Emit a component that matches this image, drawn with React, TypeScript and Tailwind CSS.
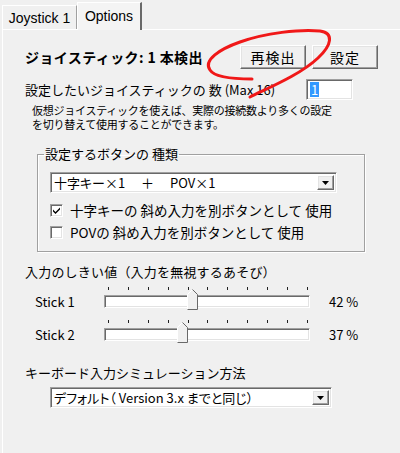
import React from 'react'

const raised =
  'border border-t-white border-l-white border-r-[#696969] border-b-[#696969] shadow-[inset_-1px_-1px_0_#a0a0a0,inset_1px_1px_0_#e3e3e3]'
const sunken =
  'border border-t-[#a0a0a0] border-l-[#a0a0a0] border-r-white border-b-white shadow-[inset_1px_1px_0_#696969,inset_-1px_-1px_0_#e3e3e3]'

function Combo({ text, width, textClass }: { text: string; width: string; textClass?: string }) {
  return (
    <div className={`${width} h-[21px] bg-white flex items-center p-[2px] ${sunken}`}>
      <span className={`flex-1 pl-[1px] text-[13px] leading-[16px] whitespace-nowrap ${textClass ?? ''}`}>{text}</span>
      <div className={`w-[17px] h-full flex items-center justify-center bg-[#f0f0f0] ${raised}`}>
        <svg width="7" height="4" viewBox="0 0 7 4">
          <path d="M0 0h7L3.5 4z" fill="#000" />
        </svg>
      </div>
    </div>
  )
}

function Check({ checked, label }: { checked?: boolean; label: string }) {
  return (
    <div className="flex items-center h-[16px]">
      <span className={`w-[13px] h-[13px] bg-white flex items-center justify-center ${sunken}`}>
        {checked && (
          <svg width="7" height="7" viewBox="0 0 7 7">
            <path d="M0 2.5L2.5 5L7 0.5V2.5L2.5 7L0 4.5Z" fill="#000" />
          </svg>
        )}
      </span>
      <span className="ml-[7px] text-[13.5px] leading-[16px] whitespace-nowrap">{label}</span>
    </div>
  )
}

function Slider({ value }: { value: number }) {
  return (
    <div className="relative w-[206px]">
      <div className="flex justify-between pl-[4px] pr-[2px] h-[3px]">
        {Array.from({ length: 11 }).map((_, i) => (
          <span key={i} className="w-px h-full bg-[#222]" />
        ))}
      </div>
      <div className={`mt-[5px] h-[13px] bg-white ${sunken}`} />
      {/* thumb */}
      <svg className="absolute top-[2px]" style={{ left: value * 2 - 1 }} width="11" height="21" viewBox="0 0 11 21">
        <path d="M0.5 20.5V5.5L5.5 0.5L10.5 5.5V20.5Z" fill="#f0f0f0" />
        <path d="M0.5 20.5V5.5L5.5 0.5" stroke="#fff" fill="none" />
        <path d="M5.5 0.5L10.5 5.5V20.5H0.5" stroke="#696969" fill="none" />
      </svg>
    </div>
  )
}

function StickRow({ name, value }: { name: string; value: number }) {
  return (
    <div className="flex items-end ml-[10px]">
      <span className="w-[69px] text-[13px] leading-[13px]">{name}</span>
      <Slider value={value} />
      <span className="ml-[19px] text-[13px] leading-[13px]">{value} %</span>
    </div>
  )
}

export default function App() {
  return (
    <div className="relative w-[400px] h-[453px] overflow-hidden bg-[#f0f0f0] text-black font-['Noto_Sans_CJK_JP',sans-serif] flex flex-col">
      {/* Tabs */}
      <div className="flex items-end h-[29px] pl-[2px] font-['Liberation_Sans',sans-serif] text-[14px]">
        <div className="h-[24px] w-[75px] flex items-center justify-center pt-px border-t border-l border-white border-r border-r-[#a0a0a0] bg-[#f0f0f0]">
          Joystick 1
        </div>
        <div className="relative z-10 -mb-px h-[28px] w-[65px] flex items-start justify-center pt-[3px] border-t border-l border-white border-r-2 border-r-[#696969] bg-[#f4f4f4]">
          Options
        </div>
      </div>

      {/* Page */}
      <div className="flex-1 ml-[2px] border-t border-l border-white pl-[22px] pt-[15px] flex flex-col">
        <div className="flex items-center h-[24px]">
          <span className="w-[215px] text-[14px] font-bold tracking-[0.4px] whitespace-nowrap">ジョイスティック: 1 本検出</span>
          <button className={`w-[66px] h-[24px] text-[14px] tracking-[1px] bg-[#f0f0f0] ${raised}`}>再検出</button>
          <button className={`ml-[6px] w-[66px] h-[24px] text-[14px] tracking-[1px] bg-[#f0f0f0] ${raised}`}>設定</button>
        </div>

        <div className="mt-[10px] flex items-center h-[21px]">
          <span className="w-[281px] text-[13px] whitespace-nowrap">設定したいジョイスティックの 数 (Max 16)</span>
          <div className={`w-[47px] h-[21px] bg-white flex items-center pl-[3px] ${sunken}`}>
            <span className="bg-[#3399ff] text-white text-[13px] leading-[15px] px-px">1</span>
          </div>
        </div>

        <p className="mt-[3px] ml-[7px] text-[11px] leading-[14px] tracking-[-0.25px]">
          仮想ジョイスティックを使えば、実際の接続数より多くの設定
          <br />
          を切り替えて使用することができます。
        </p>

        <fieldset className="mt-[15px] ml-[12px] w-[328px] border border-[#a0a0a0] shadow-[1px_1px_0_#fff,inset_1px_1px_0_#fff] px-[6px] pb-[11px]">
          <legend className="px-px text-[13px] leading-[16px]">設定するボタンの 種類</legend>
          <div className="pl-[6px] flex flex-col">
            <div className="mt-[10px]">
              <Combo width="w-[287px]" text="十字キー×1 　＋ 　POV×1" textClass="[font-feature-settings:'palt']" />
            </div>
            <div className="mt-[9px]">
              <Check checked label="十字キーの 斜め入力を別ボタンとして 使用" />
            </div>
            <div className="mt-[6px]">
              <Check label="POVの 斜め入力を別ボタンとして 使用" />
            </div>
          </div>
        </fieldset>

        <div className="mt-[12px] text-[13px] leading-[16px] tracking-[0.2px]">入力のしきい値（入力を無視するあそび）</div>

        <div className="mt-[7px]">
          <StickRow name="Stick 1" value={42} />
        </div>
        <div className="mt-[12px]">
          <StickRow name="Stick 2" value={37} />
        </div>

        <div className="mt-[24px] text-[13px] leading-[16px]">キーボード入力シミュレーション方法</div>
        <div className="mt-[6px] ml-[25px]">
          <Combo
            width="w-[282px]"
            textClass="[font-feature-settings:'palt']"
            text="デフォルト（ Version 3.x までと同じ）"
          />
        </div>
      </div>

      {/* red annotation */}
      <svg className="absolute inset-0 pointer-events-none" width="400" height="453" viewBox="0 0 400 453">
        <path
          d="M250 97C268 88 300 75 318 58C332 45 334 33 320 31C300 29 265 33 240 42C220 49 203 60 210 70C215 78 235 79 252 79"
          stroke="#f01818"
          strokeWidth="3"
          strokeLinecap="round"
          fill="none"
        />
      </svg>
    </div>
  )
}
